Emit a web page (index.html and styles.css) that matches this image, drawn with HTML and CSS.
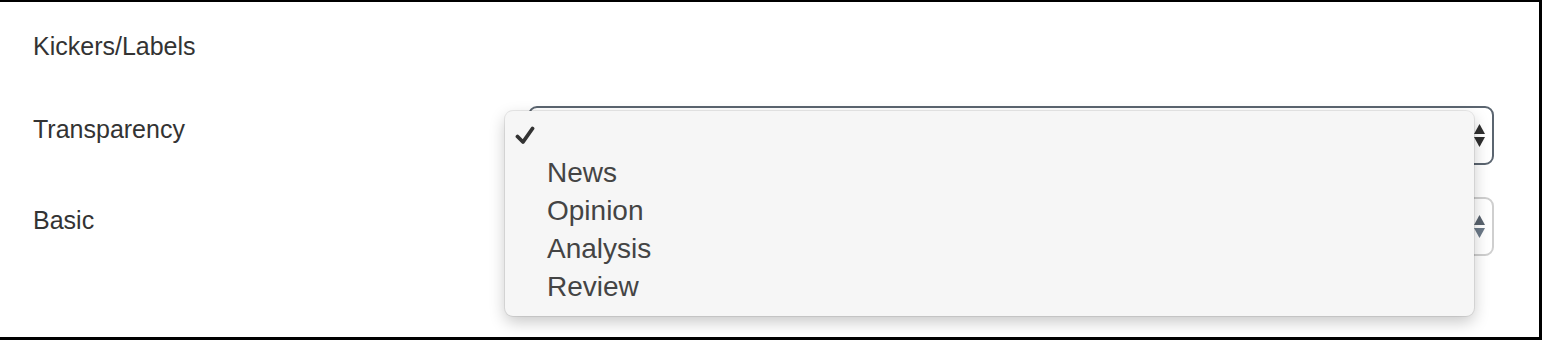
FILE: index.html
```html
<!DOCTYPE html>
<html>
<head>
<meta charset="utf-8">
<link rel="stylesheet" href="styles.css">
</head>
<body>
<div class="frame">
  <div class="heading">Kickers/Labels</div>
  <div class="rows">
    <div class="row">
      <div class="label">Transparency</div>
      <div class="select focused">
        <svg class="arrows" width="11" height="24" viewBox="0 0 11 24"><polygon points="5.5,0 11,10 0,10" fill="#2f2f2f"/><polygon points="0,13 11,13 5.5,23" fill="#2f2f2f"/></svg>
      </div>
    </div>
    <div class="row">
      <div class="label">Basic</div>
      <div class="select plain">
        <svg class="arrows" width="11" height="24" viewBox="0 0 11 24"><polygon points="5.5,0 11,10 0,10" fill="#59636e"/><polygon points="0,13 11,13 5.5,23" fill="#6c7a88"/></svg>
      </div>
    </div>
  </div>
  <div class="menu">
    <div class="item"><span class="check"><svg width="20" height="20" viewBox="0 0 20 20"><path d="M2.5 10.5 L8 16 L17.5 2.5" fill="none" stroke="#333" stroke-width="3.8" stroke-linecap="round" stroke-linejoin="round"/></svg></span><span class="text"></span></div>
    <div class="item"><span class="check"></span><span class="text">News</span></div>
    <div class="item"><span class="check"></span><span class="text">Opinion</span></div>
    <div class="item"><span class="check"></span><span class="text">Analysis</span></div>
    <div class="item"><span class="check"></span><span class="text">Review</span></div>
  </div>
</div>
</body>
</html>
```

FILE: styles.css
```css
html, body {
  margin: 0;
  padding: 0;
  background: #fff;
}
.frame {
  position: relative;
  box-sizing: border-box;
  width: 1542px;
  height: 340px;
  border-top: 2px solid #000;
  border-right: 3px solid #000;
  border-bottom: 3px solid #000;
  background: #fff;
  font-family: "Liberation Sans", Arial, sans-serif;
  color: #333;
  padding: 29px 45px 0 33px;
}
.heading {
  font-size: 25px;
  line-height: 30px;
}
.rows {
  margin-top: 45px;
  display: flex;
  flex-direction: column;
  gap: 32px;
}
.row {
  display: flex;
  align-items: flex-start;
}
.label {
  width: 495px;
  flex: none;
  font-size: 25px;
  line-height: 30px;
  padding-top: 8px;
}
.select {
  flex: 1;
  height: 59px;
  box-sizing: border-box;
  border-radius: 9px;
  background: #fff;
  display: flex;
  justify-content: flex-end;
  align-items: center;
  padding-right: 7px;
}
.select.focused {
  border: 2px solid #5b6570;
}
.select.plain {
  border: 2px solid #cfcfcf;
}
.arrows {
  display: block;
}
.menu {
  position: absolute;
  left: 505px;
  top: 109px;
  width: 969px;
  height: 205px;
  box-sizing: border-box;
  background: #f6f6f6;
  border-radius: 8px;
  box-shadow: 0 0 0 1px rgba(0,0,0,0.08), 0 6px 16px rgba(0,0,0,0.22);
  padding: 5px 0 0 10px;
}
.item {
  display: flex;
  align-items: center;
  height: 38px;
  font-size: 28px;
  line-height: 38px;
  color: #444;
}
.check {
  width: 32px;
  flex: none;
  display: flex;
  align-items: center;
}
.check svg {
  display: block;
  margin-top: 2px;
}
```
